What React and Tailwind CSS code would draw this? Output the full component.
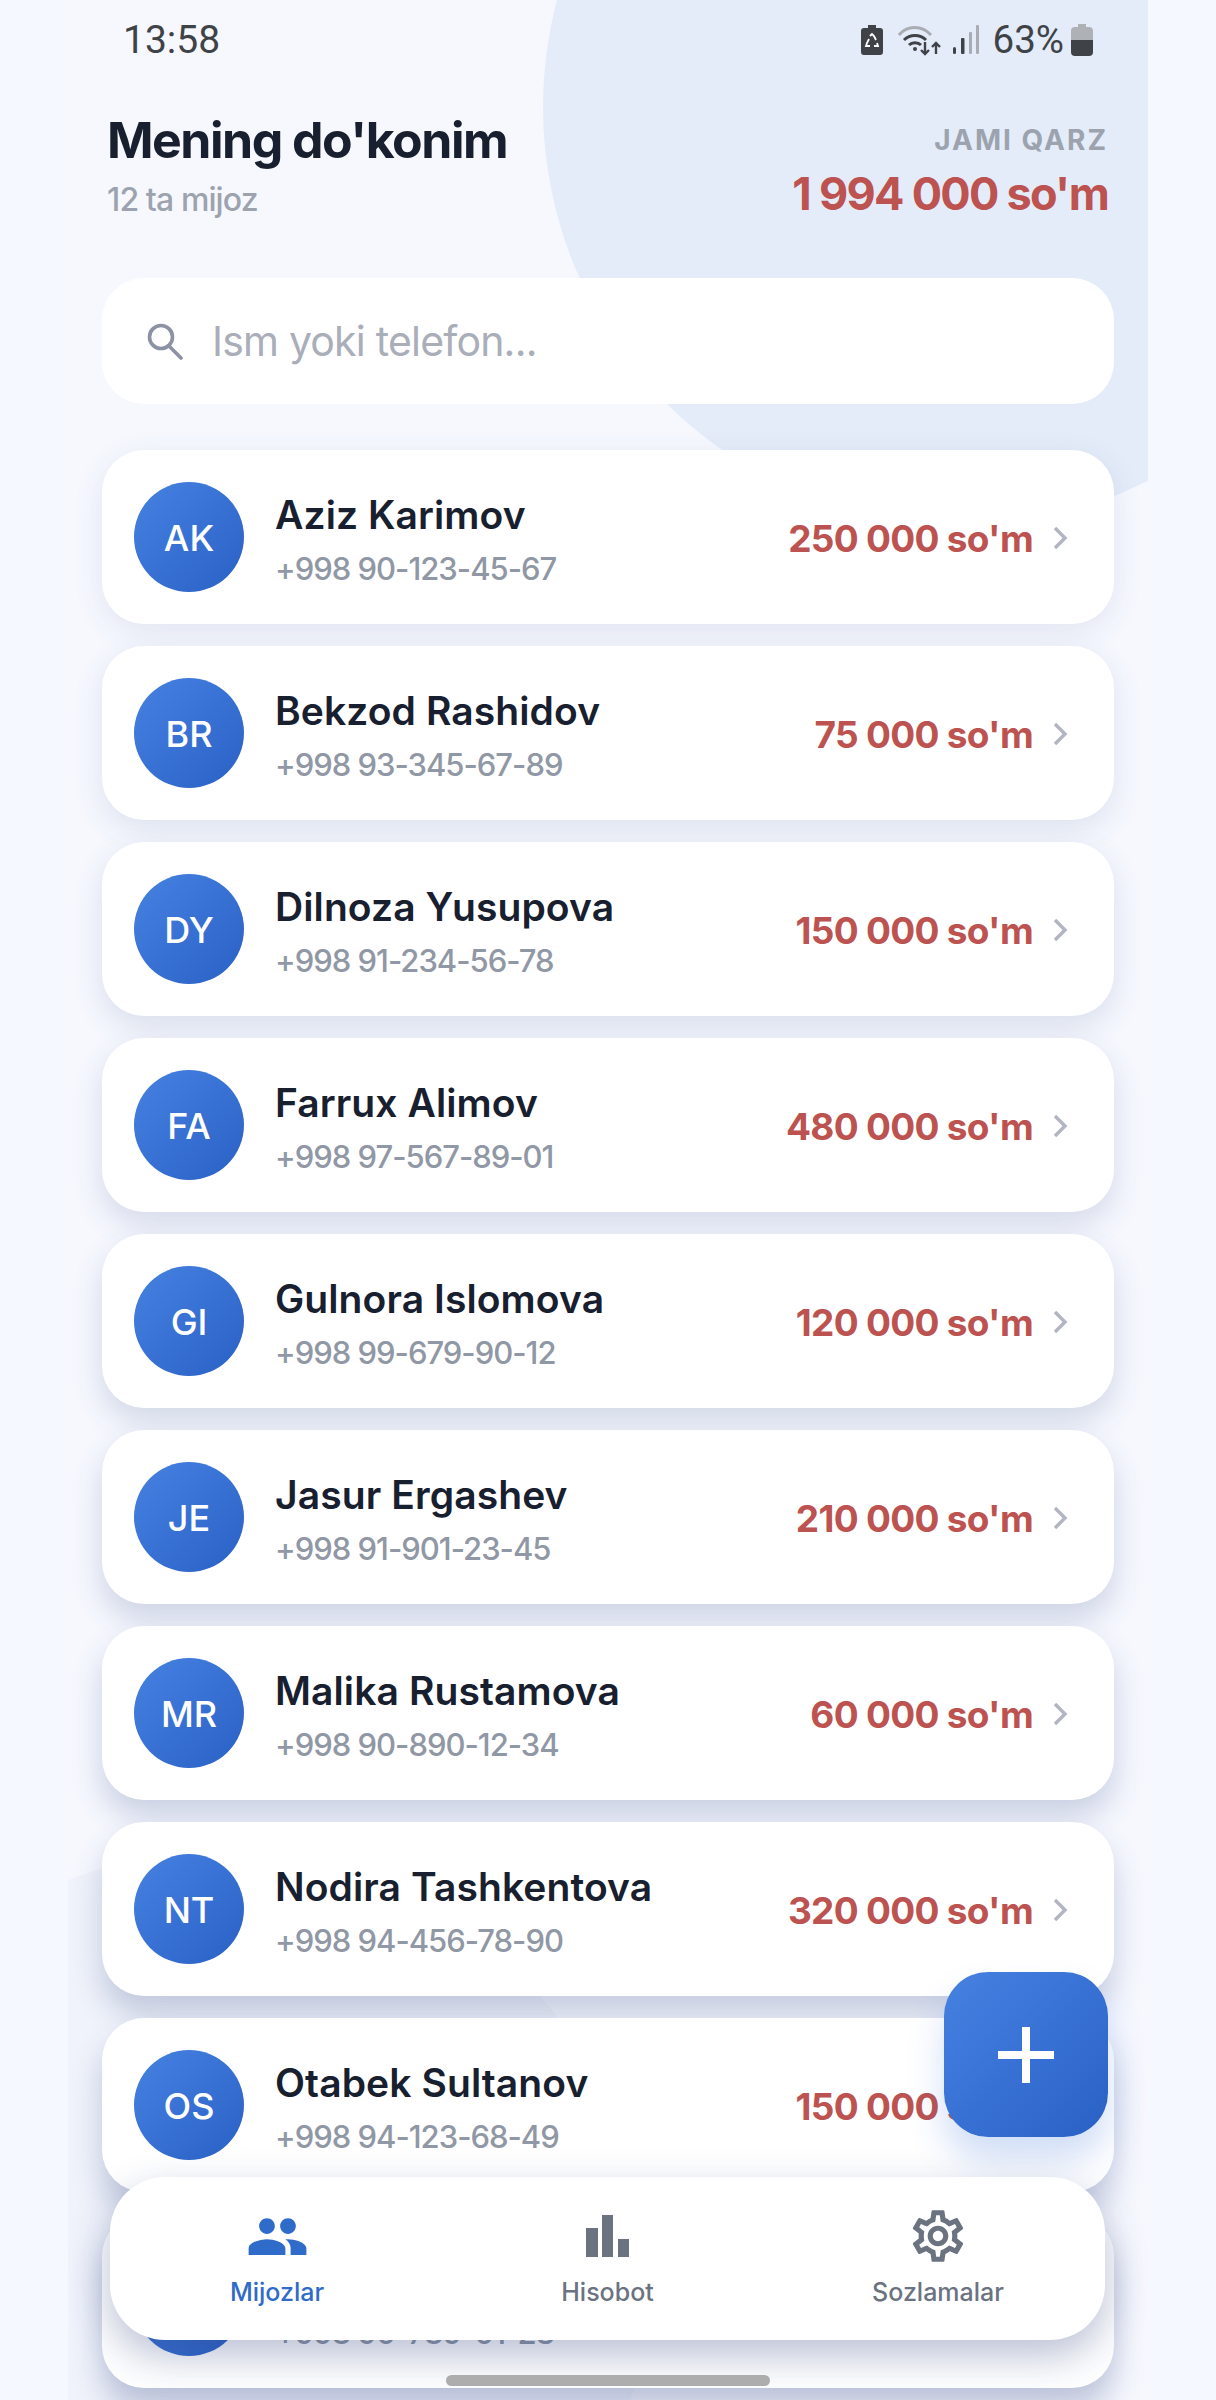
import React from 'react';
import { MdPeople, MdOutlineSettings } from 'react-icons/md';

const customers = [
  { initials: 'AK', name: 'Aziz Karimov', phone: '+998 90-123-45-67', debt: "250 000 so'm" },
  { initials: 'BR', name: 'Bekzod Rashidov', phone: '+998 93-345-67-89', debt: "75 000 so'm" },
  { initials: 'DY', name: 'Dilnoza Yusupova', phone: '+998 91-234-56-78', debt: "150 000 so'm" },
  { initials: 'FA', name: 'Farrux Alimov', phone: '+998 97-567-89-01', debt: "480 000 so'm" },
  { initials: 'GI', name: 'Gulnora Islomova', phone: '+998 99-679-90-12', debt: "120 000 so'm" },
  { initials: 'JE', name: 'Jasur Ergashev', phone: '+998 91-901-23-45', debt: "210 000 so'm" },
  { initials: 'MR', name: 'Malika Rustamova', phone: '+998 90-890-12-34', debt: "60 000 so'm" },
  { initials: 'NT', name: 'Nodira Tashkentova', phone: '+998 94-456-78-90', debt: "320 000 so'm" },
  { initials: 'OS', name: 'Otabek Sultanov', phone: '+998 94-123-68-49', debt: "150 000 so'm" },
  { initials: 'SU', name: 'Sardor Umarov', phone: '+998 90-789-01-23', debt: "95 000 so'm" },
];

function StatusIcons() {
  return (
    <div className="flex items-center">
      <svg width="24" height="32" viewBox="0 0 24 32" className="mr-[14px]">
        <path d="M8 1h8v3h4a3 3 0 0 1 3 3v21a3 3 0 0 1-3 3H4a3 3 0 0 1-3-3V7a3 3 0 0 1 3-3h4z" fill="#3f4347" />
        <path d="M10 12l2-2 2 2 2 4M17 19l1 3h-4M10 22H6l1-3 2-4" fill="none" stroke="#fff" strokeWidth="1.8" />
      </svg>
      <svg width="46" height="32" viewBox="0 0 46 32" className="mr-[8px]">
        <path d="M1 11C9 1 24 1 33 11" fill="none" stroke="#a9adb3" strokeWidth="3" />
        <path d="M6 16c6-6 16-6 22 0M11 21c3-3 9-3 12 0" fill="none" stroke="#3f4347" strokeWidth="3" />
        <circle cx="17" cy="25" r="2" fill="#3f4347" />
        <path d="M27 18v12M23 26l4 4 4-4M38 30V19M34 23l4-4 4 4" fill="none" stroke="#3f4347" strokeWidth="2.4" />
      </svg>
      <svg width="28" height="32" viewBox="0 0 28 32" className="mr-[13px]">
        <rect x="1" y="23" width="3" height="7" rx="1.5" fill="#3f4347" />
        <rect x="9" y="14" width="3.5" height="16" rx="1" fill="#3f4347" />
        <rect x="17" y="8" width="3" height="22" rx="1" fill="#a9adb3" />
        <rect x="24" y="1" width="3" height="29" rx="1" fill="#a9adb3" />
      </svg>
      <span className="font-['Roboto',sans-serif] text-[38.5px] leading-none text-[#3f4347]">63%</span>
      <svg width="22" height="32" viewBox="0 0 22 32" className="ml-[7px]">
        <path d="M7 0h8v3h3a4 4 0 0 1 4 4v9H0V7a4 4 0 0 1 4-4h3z" fill="#aeb1b6" />
        <path d="M0 16h22v12a4 4 0 0 1-4 4H4a4 4 0 0 1-4-4z" fill="#3f4347" />
      </svg>
    </div>
  );
}

function CustomerRow({ customer, index }) {
  // shadow gets longer further down the screen, like android elevation
  const shadow = `0 ${8 + index * 1.5}px 30px rgba(50,70,130,${(0.1 + index * 0.02).toFixed(3)})`;
  return (
    <div
      className="flex h-[174px] shrink-0 items-center rounded-[42px] bg-white pl-[32px] pr-[46px]"
      style={{ boxShadow: shadow }}
    >
      <div className="flex h-[110px] w-[110px] shrink-0 items-center justify-center rounded-full bg-[linear-gradient(135deg,#4682e2,#2a60c5)] pt-[2px] text-[36px] font-medium text-white">
        {customer.initials}
      </div>
      <div className="ml-[31px] flex min-w-0 flex-1 flex-col pt-[5px]">
        <span className="text-[39px] leading-[50px] font-semibold tracking-[0.1px] text-[#18202f]">{customer.name}</span>
        <span className="mt-[9px] text-[31px] leading-[40px] font-medium tracking-[-1px] text-[#9097a5]">{customer.phone}</span>
      </div>
      <span className="mt-[3px] text-[37px] font-bold tracking-[-0.7px] text-[#bc5350]">{customer.debt}</span>
      <svg width="16" height="24" viewBox="0 0 16 24" className="ml-[19px] mt-[2px]">
        <path d="M3 2l10 10L3 22" fill="none" stroke="#b0b5c1" strokeWidth="3.4" />
      </svg>
    </div>
  );
}

function NavItem({ icon, label, active }) {
  return (
    <div className={`flex w-[240px] flex-col items-center ${active ? 'text-[#2f6bc9]' : 'text-[#6b7280]'}`}>
      <div className="flex h-[64px] items-center justify-center">{icon}</div>
      <span className="mt-[8px] text-[25px] leading-[32px] font-medium">{label}</span>
    </div>
  );
}

export default function App() {
  return (
    <div className="h-[2400px] w-[1216px] overflow-hidden bg-[#f5f8fe] px-[68px] font-['Inter',sans-serif]">
      <div className="relative h-[2400px] w-[1080px] overflow-hidden bg-[#f6f8fe]">
        <div className="absolute left-[475px] top-[-311px] h-[836px] w-[836px] rounded-full bg-[#e4ecf9]" />
        <div className="absolute left-[-276px] top-[1852px] h-[856px] w-[856px] rounded-full bg-[#f0f3fb]" />

        <div className="relative flex h-[80px] items-center justify-between pl-[55px] pr-[55px]">
          <span className="font-['Roboto',sans-serif] text-[39px] leading-none text-[#3f4347]">13:58</span>
          <StatusIcons />
        </div>

        <div className="relative flex h-[198px] justify-between pl-[39px] pr-[40px] pt-[30px]">
          <div className="flex flex-col">
            <span className="text-[50px] leading-[60px] font-bold tracking-[-1.5px] text-[#18202f]">Mening do'konim</span>
            <span className="mt-[10px] text-[32px] leading-[40px] font-medium tracking-[-0.9px] text-[#9ca3af]">12 ta mijoz</span>
          </div>
          <div className="flex flex-col items-end">
            <span className="mt-[12px] text-[28px] leading-[36px] font-bold tracking-[2px] text-[#9ca3af]">JAMI QARZ</span>
            <span className="mt-[9px] text-[45px] leading-[54px] font-bold tracking-[-1.7px] text-[#bc5350]">1 994 000 so'm</span>
          </div>
        </div>

        <div className="relative mx-[34px] flex h-[126px] items-center rounded-[42px] bg-white pl-[44px]">
          <svg width="38" height="38" viewBox="0 0 38 38">
            <circle cx="15" cy="15" r="11.5" fill="none" stroke="#8c92a3" strokeWidth="3.6" />
            <path d="M23 24l12 12" stroke="#8c92a3" strokeWidth="3.6" strokeLinecap="round" />
          </svg>
          <span className="ml-[28px] mt-[2px] text-[41px] tracking-[-0.8px] text-[#a9aeb9]">Ism yoki telefon...</span>
        </div>

        <div className="relative mx-[34px] mt-[46px] flex flex-col gap-[22px]">
          {customers.map((c, i) => (
            <CustomerRow key={c.initials} customer={c} index={i} />
          ))}
        </div>

        <div className="absolute left-[876px] top-[1972px] flex h-[165px] w-[164px] items-center justify-center rounded-[44px] bg-[linear-gradient(135deg,#4682e2,#2a60c5)] shadow-[0_24px_36px_rgba(46,107,214,0.22)]">
          <svg width="56" height="56" viewBox="0 0 56 56">
            <path d="M24 0h8v24h24v8H32v24h-8V32H0v-8h24z" fill="#fff" />
          </svg>
        </div>

        <div className="absolute left-[42px] top-[2177px] flex h-[163px] w-[995px] justify-between rounded-[55px] bg-white px-[47px] pt-[27px] shadow-[0_16px_40px_rgba(40,60,120,0.32)]">
          <NavItem active label="Mijozlar" icon={<MdPeople size={63} />} />
          <NavItem
            label="Hisobot"
            icon={
              <svg width="44" height="44" viewBox="0 0 44 44" fill="currentColor">
                <rect x="0" y="14" width="12" height="29" />
                <rect x="16" y="1" width="11" height="42" />
                <rect x="32" y="25" width="11" height="18" />
              </svg>
            }
          />
          <NavItem label="Sozlamalar" icon={<MdOutlineSettings size={62} />} />
        </div>

        <div className="absolute left-[378px] top-[2375px] h-[11px] w-[324px] rounded-full bg-[#adadad]" />
      </div>
    </div>
  );
}
